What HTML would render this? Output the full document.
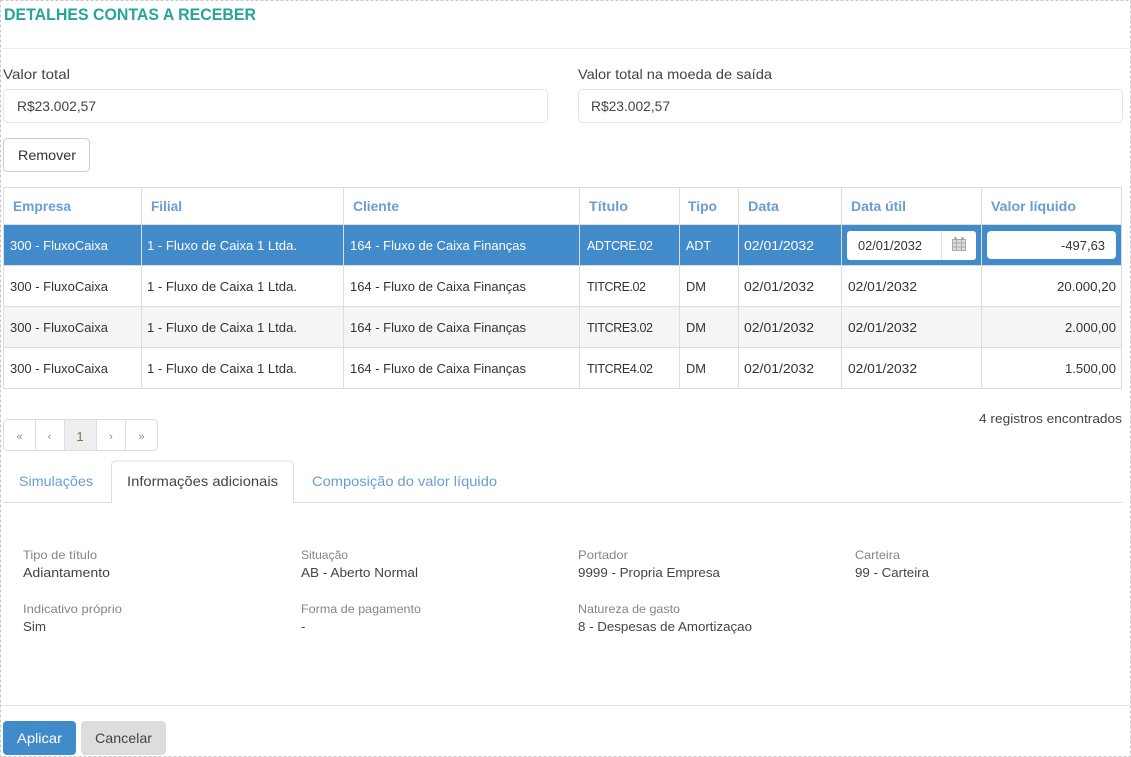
<!DOCTYPE html>
<html lang="pt"><head><meta charset="utf-8"><title>Detalhes contas a receber</title>
<style>
html,body{margin:0;padding:0;background:#fff;width:1131px;height:757px;overflow:hidden}
svg{display:block;font-family:"Liberation Sans",sans-serif;font-size:13px;fill:#333}
.l{font-size:14px;fill:#444}
.h{font-size:14px;font-weight:bold;fill:#6b9cd4}
.w{fill:#fff}
.c{font-size:12.5px}
.s{font-size:12px;fill:#858585}
.v{fill:#444}
.t{font-size:14px;fill:#6b9cd4}
.p{font-size:11px;fill:#888}
</style></head><body>
<svg width="1131" height="757" viewBox="0 0 1131 757" xmlns="http://www.w3.org/2000/svg">
<rect x="0.5" y="0.5" width="1130" height="756" fill="#fff" stroke="#c8c8c8" stroke-dasharray="3 2"/>
<text x="4" y="20" textLength="252" lengthAdjust="spacingAndGlyphs" style="font-size:16.5px;font-weight:bold;fill:#26a69a">DETALHES CONTAS A RECEBER</text>
<rect x="1" y="48" width="1129" height="1" fill="#eee"/>

<text class="l" x="3" y="79" textLength="67" lengthAdjust="spacingAndGlyphs">Valor total</text>
<rect x="3.5" y="89.5" width="544" height="33" rx="4" fill="#fff" stroke="#e5e5e5"/>
<text class="l" x="17" y="111" textLength="79" lengthAdjust="spacingAndGlyphs">R$23.002,57</text>
<text class="l" x="578" y="79" textLength="194" lengthAdjust="spacingAndGlyphs">Valor total na moeda de saída</text>
<rect x="578.5" y="89.5" width="544" height="33" rx="4" fill="#fff" stroke="#e5e5e5"/>
<text class="l" x="591" y="111" textLength="79" lengthAdjust="spacingAndGlyphs">R$23.002,57</text>
<rect x="3.5" y="138.5" width="86" height="33" rx="4" fill="#fff" stroke="#ccc"/>
<text class="l" x="18" y="160" textLength="58" lengthAdjust="spacingAndGlyphs" style="fill:#333">Remover</text>

<rect x="3" y="225" width="1119" height="40" fill="#428bca"/>
<rect x="3" y="307" width="1119" height="40" fill="#f5f5f5"/>
<g fill="#ddd">
<rect x="3" y="187" width="1119" height="1"/><rect x="3" y="224" width="1119" height="1"/>
<rect x="3" y="265" width="1119" height="1"/><rect x="3" y="306" width="1119" height="1"/>
<rect x="3" y="347" width="1119" height="1"/><rect x="3" y="388" width="1119" height="1"/>
<rect x="3" y="187" width="1" height="202"/><rect x="141" y="187" width="1" height="202"/>
<rect x="343" y="187" width="1" height="202"/><rect x="579" y="187" width="1" height="202"/>
<rect x="679" y="187" width="1" height="202"/><rect x="738" y="187" width="1" height="202"/>
<rect x="841" y="187" width="1" height="202"/><rect x="981" y="187" width="1" height="202"/>
<rect x="1121" y="187" width="1" height="202"/>
</g>
<text class="h" x="13" y="211" textLength="58" lengthAdjust="spacingAndGlyphs">Empresa</text>
<text class="h" x="151" y="211" textLength="31" lengthAdjust="spacingAndGlyphs">Filial</text>
<text class="h" x="353" y="211" textLength="46" lengthAdjust="spacingAndGlyphs">Cliente</text>
<text class="h" x="589" y="211" textLength="39" lengthAdjust="spacingAndGlyphs">Título</text>
<text class="h" x="688" y="211" textLength="29" lengthAdjust="spacingAndGlyphs">Tipo</text>
<text class="h" x="748" y="211" textLength="31" lengthAdjust="spacingAndGlyphs">Data</text>
<text class="h" x="851" y="211" textLength="55" lengthAdjust="spacingAndGlyphs">Data útil</text>
<text class="h" x="991" y="211" textLength="85" lengthAdjust="spacingAndGlyphs">Valor líquido</text>

<text class="w" x="10" y="250" textLength="98" lengthAdjust="spacingAndGlyphs">300 - FluxoCaixa</text>
<text class="w" x="147" y="250" textLength="150" lengthAdjust="spacingAndGlyphs">1 - Fluxo de Caixa 1 Ltda.</text>
<text class="w" x="350" y="250" textLength="176" lengthAdjust="spacingAndGlyphs">164 - Fluxo de Caixa Finanças</text>
<text class="w c" x="587" y="250" textLength="66" lengthAdjust="spacing">ADTCRE.02</text>
<text class="w" x="686" y="250" textLength="25" lengthAdjust="spacingAndGlyphs">ADT</text>
<text class="w" x="744" y="250" textLength="70" lengthAdjust="spacingAndGlyphs">02/01/2032</text>
<rect x="847" y="231" width="129" height="29" rx="3" fill="#fff"/>
<rect x="941" y="231" width="1" height="29" fill="#e5e5e5"/>
<text x="858" y="250" textLength="64" lengthAdjust="spacingAndGlyphs">02/01/2032</text>
<g fill="none" stroke="#aaa" stroke-width="1">
<rect x="952.5" y="239.5" width="13" height="11" fill="#ddd"/>
<path d="M952.5 243h13M952.5 247h13M956.5 240v10M961.5 240v10"/>
</g>
<path d="M955.5 237v3M962.5 237v3" stroke="#999" stroke-width="2"/>
<rect x="987" y="231" width="129" height="28" rx="4" fill="#fff"/>
<text x="1061" y="250" textLength="44" lengthAdjust="spacingAndGlyphs">-497,63</text>

<text x="10" y="291" textLength="98" lengthAdjust="spacingAndGlyphs">300 - FluxoCaixa</text>
<text x="147" y="291" textLength="150" lengthAdjust="spacingAndGlyphs">1 - Fluxo de Caixa 1 Ltda.</text>
<text x="350" y="291" textLength="176" lengthAdjust="spacingAndGlyphs">164 - Fluxo de Caixa Finanças</text>
<text class="c" x="587" y="291" textLength="59" lengthAdjust="spacing">TITCRE.02</text>
<text x="686" y="291" textLength="20" lengthAdjust="spacingAndGlyphs">DM</text>
<text x="744" y="291" textLength="70" lengthAdjust="spacingAndGlyphs">02/01/2032</text>
<text x="848" y="291" textLength="69" lengthAdjust="spacingAndGlyphs">02/01/2032</text>
<text x="1057" y="291" textLength="59" lengthAdjust="spacingAndGlyphs">20.000,20</text>

<text x="10" y="332" textLength="98" lengthAdjust="spacingAndGlyphs">300 - FluxoCaixa</text>
<text x="147" y="332" textLength="150" lengthAdjust="spacingAndGlyphs">1 - Fluxo de Caixa 1 Ltda.</text>
<text x="350" y="332" textLength="176" lengthAdjust="spacingAndGlyphs">164 - Fluxo de Caixa Finanças</text>
<text class="c" x="587" y="332" textLength="66" lengthAdjust="spacing">TITCRE3.02</text>
<text x="686" y="332" textLength="20" lengthAdjust="spacingAndGlyphs">DM</text>
<text x="744" y="332" textLength="70" lengthAdjust="spacingAndGlyphs">02/01/2032</text>
<text x="848" y="332" textLength="69" lengthAdjust="spacingAndGlyphs">02/01/2032</text>
<text x="1065" y="332" textLength="51" lengthAdjust="spacingAndGlyphs">2.000,00</text>

<text x="10" y="373" textLength="98" lengthAdjust="spacingAndGlyphs">300 - FluxoCaixa</text>
<text x="147" y="373" textLength="150" lengthAdjust="spacingAndGlyphs">1 - Fluxo de Caixa 1 Ltda.</text>
<text x="350" y="373" textLength="176" lengthAdjust="spacingAndGlyphs">164 - Fluxo de Caixa Finanças</text>
<text class="c" x="587" y="373" textLength="66" lengthAdjust="spacing">TITCRE4.02</text>
<text x="686" y="373" textLength="20" lengthAdjust="spacingAndGlyphs">DM</text>
<text x="744" y="373" textLength="70" lengthAdjust="spacingAndGlyphs">02/01/2032</text>
<text x="848" y="373" textLength="69" lengthAdjust="spacingAndGlyphs">02/01/2032</text>
<text x="1065" y="373" textLength="51" lengthAdjust="spacingAndGlyphs">1.500,00</text>

<text x="979" y="423" textLength="143" lengthAdjust="spacingAndGlyphs" style="fill:#444">4 registros encontrados</text>

<rect x="3.5" y="419.5" width="154" height="31" rx="4" fill="#fff" stroke="#ddd"/>
<rect x="65" y="420" width="31" height="30" fill="#eee"/>
<path d="M35.5 420v30M64.5 420v30M96.5 420v30M125.5 420v30" stroke="#ddd"/>
<text class="p" x="19.5" y="440" text-anchor="middle">«</text>
<text class="p" x="49.5" y="440" text-anchor="middle">‹</text>
<text x="80" y="441" text-anchor="middle" style="fill:#8a6d3b">1</text>
<text class="p" x="111" y="440" text-anchor="middle">›</text>
<text class="p" x="141.5" y="440" text-anchor="middle">»</text>

<rect x="3" y="502" width="1120" height="1" fill="#ddd"/>
<path d="M111.5 503V465a4 4 0 0 1 4-4H289.5a4 4 0 0 1 4 4V503" fill="#fff" stroke="#ddd"/>
<rect x="112" y="500" width="181" height="4" fill="#fff"/>
<text class="t" x="19" y="486" textLength="74" lengthAdjust="spacingAndGlyphs">Simulações</text>
<text class="l" x="127" y="486" textLength="151" lengthAdjust="spacingAndGlyphs">Informações adicionais</text>
<text class="t" x="312" y="486" textLength="185" lengthAdjust="spacingAndGlyphs">Composição do valor líquido</text>

<text class="s" x="23" y="559" textLength="74" lengthAdjust="spacingAndGlyphs">Tipo de título</text>
<text class="v" x="23" y="577" textLength="87" lengthAdjust="spacingAndGlyphs">Adiantamento</text>
<text class="s" x="301" y="559" textLength="47" lengthAdjust="spacingAndGlyphs">Situação</text>
<text class="v" x="301" y="577" textLength="117" lengthAdjust="spacingAndGlyphs">AB - Aberto Normal</text>
<text class="s" x="578" y="559" textLength="50" lengthAdjust="spacingAndGlyphs">Portador</text>
<text class="v" x="578" y="577" textLength="142" lengthAdjust="spacingAndGlyphs">9999 - Propria Empresa</text>
<text class="s" x="855" y="559" textLength="45" lengthAdjust="spacingAndGlyphs">Carteira</text>
<text class="v" x="855" y="577" textLength="74" lengthAdjust="spacingAndGlyphs">99 - Carteira</text>
<text class="s" x="23" y="613" textLength="99" lengthAdjust="spacingAndGlyphs">Indicativo próprio</text>
<text class="v" x="23" y="631" textLength="23" lengthAdjust="spacingAndGlyphs">Sim</text>
<text class="s" x="301" y="613" textLength="120" lengthAdjust="spacingAndGlyphs">Forma de pagamento</text>
<text class="v" x="301" y="631">-</text>
<text class="s" x="578" y="613" textLength="102" lengthAdjust="spacingAndGlyphs">Natureza de gasto</text>
<text class="v" x="578" y="631" textLength="174" lengthAdjust="spacingAndGlyphs">8 - Despesas de Amortizaçao</text>

<rect x="1" y="705" width="1129" height="1" fill="#e5e5e5"/>
<rect x="3" y="721" width="73" height="34" rx="4" fill="#428bca"/>
<text class="l" x="17" y="743" textLength="45" lengthAdjust="spacingAndGlyphs" style="fill:#fff">Aplicar</text>
<rect x="81" y="721" width="85" height="34" rx="4" fill="#ddd"/>
<text class="l" x="95" y="743" textLength="57" lengthAdjust="spacingAndGlyphs" style="fill:#444">Cancelar</text>
</svg>
</body></html>
